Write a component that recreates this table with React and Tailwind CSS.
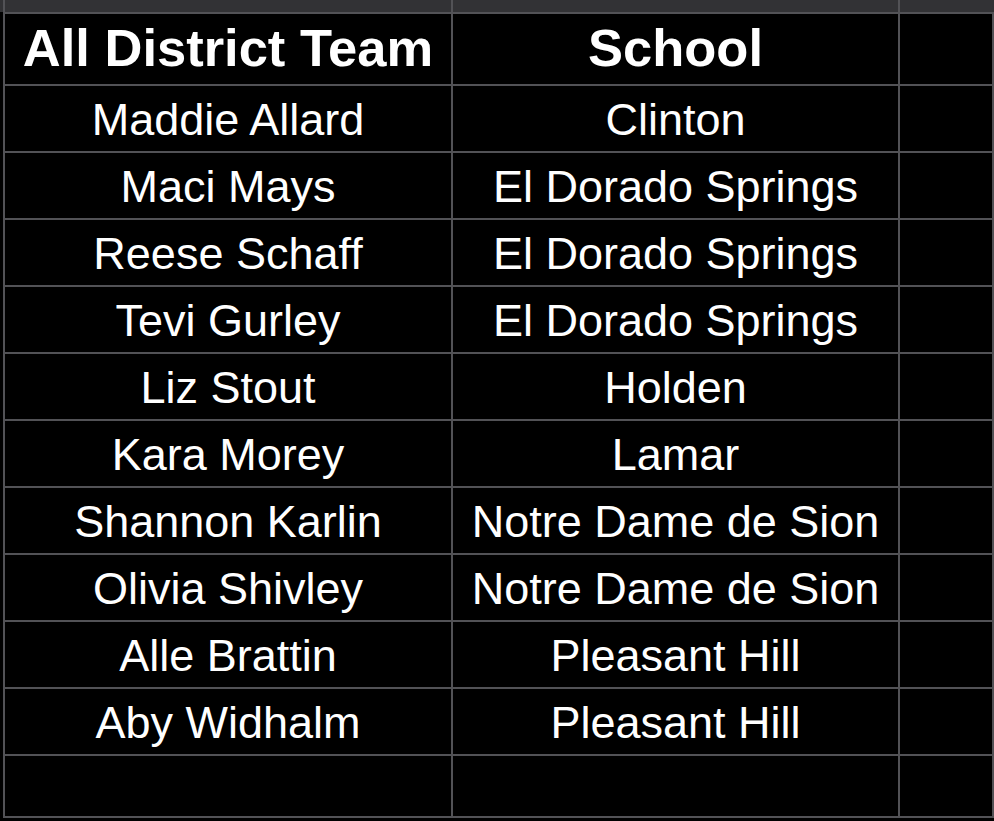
import React from 'react'

const rows = [
  ['Maddie Allard', 'Clinton'],
  ['Maci Mays', 'El Dorado Springs'],
  ['Reese Schaff', 'El Dorado Springs'],
  ['Tevi Gurley', 'El Dorado Springs'],
  ['Liz Stout', 'Holden'],
  ['Kara Morey', 'Lamar'],
  ['Shannon Karlin', 'Notre Dame de Sion'],
  ['Olivia Shivley', 'Notre Dame de Sion'],
  ['Alle Brattin', 'Pleasant Hill'],
  ['Aby Widhalm', 'Pleasant Hill'],
]

const cell = 'border-r-2 border-b-2 border-[#525256] flex items-center justify-center whitespace-nowrap'

export default function App() {
  return (
    <div
      className="w-[994px] h-[821px] overflow-hidden bg-black text-white"
      style={{ fontFamily: '"Liberation Sans", Arial, sans-serif' }}
    >
      {/* frozen header strip above the sheet */}
      <div className="h-[12px] bg-[#323235] flex">
        <div className="w-[3px]" />
        <div className="w-[2px] bg-[#525256]" />
        <div className="w-[446px]" />
        <div className="w-[2px] bg-[#525256]" />
        <div className="w-[445px]" />
        <div className="w-[2px] bg-[#525256]" />
      </div>

      <div className="ml-[3px] border-l-2 border-t-2 border-[#525256] grid grid-cols-[448px_447px_1fr]">
        <div className={`${cell} h-[72px] pb-[2px] text-[52.5px] font-bold`}>All District Team</div>
        <div className={`${cell} h-[72px] pb-[2px] text-[52.5px] font-bold`}>School</div>
        <div className={`${cell} h-[72px]`} />

        {rows.map((r, i) => (
          <React.Fragment key={i}>
            <div className={`${cell} h-[67px] pt-[3px] text-[45px]`}>{r[0]}</div>
            <div className={`${cell} h-[67px] pt-[3px] text-[45px]`}>{r[1]}</div>
            <div className={`${cell} h-[67px]`} />
          </React.Fragment>
        ))}

        <div className={`${cell} h-[62px]`} />
        <div className={`${cell} h-[62px]`} />
        <div className={`${cell} h-[62px]`} />
      </div>
    </div>
  )
}
